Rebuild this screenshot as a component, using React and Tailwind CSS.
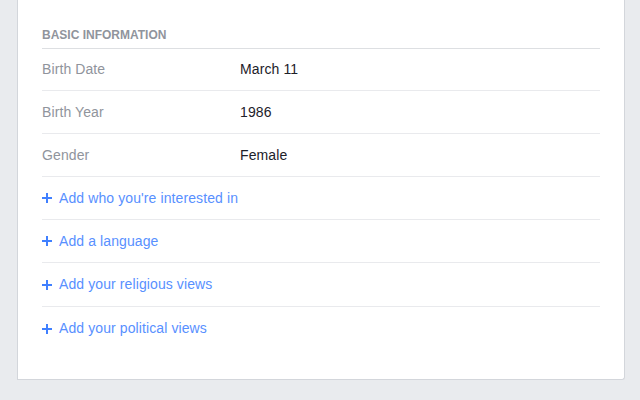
import React from "react";

const facts = [
  { label: "Birth Date", value: "March 11", h: "h-[42px]" },
  { label: "Birth Year", value: "1986", h: "h-[43px]" },
  { label: "Gender", value: "Female", h: "h-[43px]" },
];

const adds = [
  { text: "Add who you're interested in", h: "h-[43px] border-b" },
  { text: "Add a language", h: "h-[43px] border-b" },
  { text: "Add your religious views", h: "h-[44px] border-b" },
  { text: "Add your political views", h: "h-[43px]" },
];

function Plus() {
  return (
    <svg width="10" height="10" viewBox="0 0 10 10" className="shrink-0">
      <path d="M5 0v10M0 5h10" stroke="#4080ff" strokeWidth="2" />
    </svg>
  );
}

export default function App() {
  return (
    <div
      className="w-[640px] h-[400px] bg-[#e9ebee] overflow-hidden"
      style={{ fontFamily: '"Liberation Sans", Arial, sans-serif' }}
    >
      {/* panel */}
      <div className="ml-[17px] w-[608px] bg-white border-l border-r border-b border-[#d3d6db] rounded-br-[3px] pl-[24px] pr-[24px] pb-[29px]">
        <div className="pt-[28px] pb-[6px] border-b border-[#dddfe2] text-[12px] leading-[14px] font-bold text-[#90949c]">
          BASIC INFORMATION
        </div>

        {facts.map((f) => (
          <div
            key={f.label}
            className={`flex items-center ${f.h} border-b border-[#e9eaed] text-[14px] tracking-[0.1px]`}
          >
            <span className="w-[198px] text-[#90949c]">{f.label}</span>
            <span className="text-[#1d2129]">{f.value}</span>
          </div>
        ))}

        {adds.map((a) => (
          <div
            key={a.text}
            className={`flex items-center gap-[7px] ${a.h} border-[#e9eaed] text-[14px] tracking-[0.1px] text-[#5890ff]`}
          >
            <Plus />
            <span>{a.text}</span>
          </div>
        ))}
      </div>
    </div>
  );
}
